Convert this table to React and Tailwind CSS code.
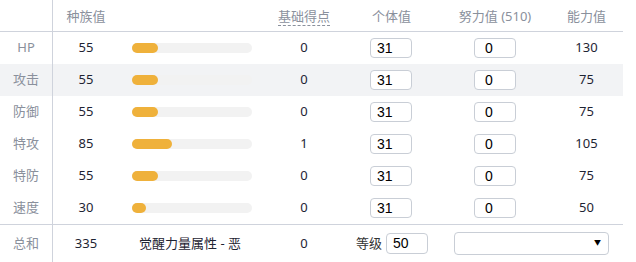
const stats = [
  { name: "HP", base: 55, ev: 0, iv: 31, effort: 0, value: 130 },
  { name: "攻击", base: 55, ev: 0, iv: 31, effort: 0, value: 75 },
  { name: "防御", base: 55, ev: 0, iv: 31, effort: 0, value: 75 },
  { name: "特攻", base: 85, ev: 1, iv: 31, effort: 0, value: 105 },
  { name: "特防", base: 55, ev: 0, iv: 31, effort: 0, value: 75 },
  { name: "速度", base: 30, ev: 0, iv: 31, effort: 0, value: 50 },
];

const cols = "grid grid-cols-[53px_66px_146px_78px_97px_110px_73px]";

function Bar({ base }) {
  return (
    <div className="w-[120px] h-[10px] rounded-full bg-[#f2f2f2] ml-[13px]">
      <div
        className="h-full rounded-full bg-[#efb13b]"
        style={{ width: `${(base / 255) * 120}px` }}
      />
    </div>
  );
}

function NumInput({ value, pad }) {
  return (
    <div
      className={`w-[42px] h-[20px] rounded-[4px] border border-[#c9ced6] bg-white flex items-center text-[14px] text-black font-['Liberation_Sans',sans-serif] ${pad}`}
    >
      {value}
    </div>
  );
}

export default function App() {
  return (
    <div className="w-[636px] h-[262px] bg-white font-['Noto_Sans','Noto_Sans_CJK_SC',sans-serif] text-[13px] text-[#1e2433]">
      <div className="w-[623px]">
        <div className={`${cols} h-[32px] border-b border-[#cfd3dc] text-[#8a909c]`}>
          <div className="border-r border-[#cfd3dc]" />
          <div className="flex items-center justify-center pt-[2px]">种族值</div>
          <div />
          <div className="flex items-center justify-center pt-[2px]">
            <span className="border-b border-dashed border-[#8a909c] leading-[17px]">基础得点</span>
          </div>
          <div className="flex items-center justify-center pt-[2px]">个体值</div>
          <div className="flex items-center justify-center pt-[2px]">努力值 (510)</div>
          <div className="flex items-center justify-center pt-[2px]">能力值</div>
        </div>
        {stats.map((s, i) => (
          <div key={s.name} className={`${cols} h-[32px] ${i === 1 ? "bg-[#f2f3f5]" : ""}`}>
            <div className="border-r border-[#cfd3dc] flex items-center justify-center text-[#8a909c]">
              {s.name}
            </div>
            <div className="flex items-center justify-center">{s.base}</div>
            <div className="flex items-center">
              <Bar base={s.base} />
            </div>
            <div className="flex items-center justify-center">{s.ev}</div>
            <div className="flex items-center pl-[27px]">
              <NumInput value={s.iv} pad="pl-[6px]" />
            </div>
            <div className="flex items-center pl-[34px]">
              <NumInput value={s.effort} pad="pl-[10px]" />
            </div>
            <div className="flex items-center justify-center">{s.value}</div>
          </div>
        ))}
        <div className={`${cols} h-[38px] border-t border-[#cfd3dc]`}>
          <div className="border-r border-[#cfd3dc] flex items-center justify-center text-[#8a909c]">
            总和
          </div>
          <div className="flex items-center justify-center">335</div>
          <div className="flex items-center justify-center pr-[4px]">觉醒力量属性 - 恶</div>
          <div className="flex items-center justify-center">0</div>
          <div className="flex items-center pl-[13px] gap-[4px]">
            <span className="text-[#333]">等级</span>
            <NumInput value={50} pad="pl-[6px] !h-[21px]" />
          </div>
          <div className="col-span-2 flex items-center pl-[14px]">
            <div className="w-[155px] h-[23px] rounded-[4px] border border-[#c9ced6] bg-white flex items-center justify-end pr-[7px] text-[7px] text-black">
              ▼
            </div>
          </div>
        </div>
      </div>
    </div>
  );
}
